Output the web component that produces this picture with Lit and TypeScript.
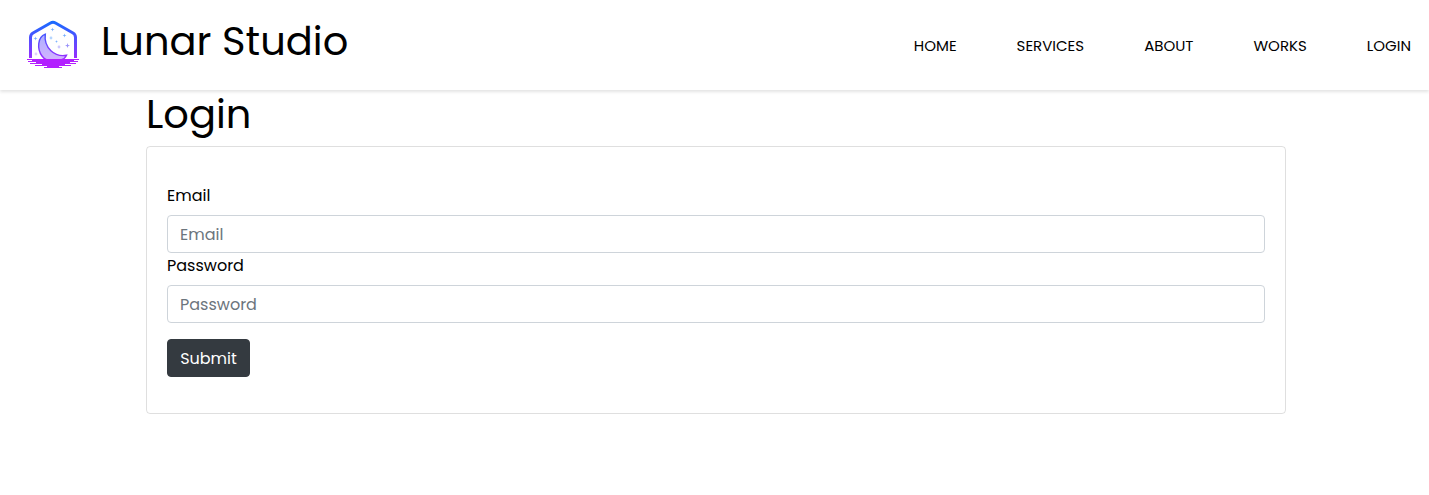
import { LitElement, html, css, svg } from "lit";
import { customElement } from "lit/decorators.js";

const star = (x: number, y: number, r: number) => svg`<path d="M${x} ${y - r}L${x + r * 0.25} ${y - r * 0.25}L${x + r} ${y}L${x + r * 0.25} ${y + r * 0.25}L${x} ${y + r}L${x - r * 0.25} ${y + r * 0.25}L${x - r} ${y}L${x - r * 0.25} ${y - r * 0.25}Z"/>`;

@customElement("app-root")
export class AppRoot extends LitElement {
  static styles = css`
    :host { display: block; min-height: 495px; background: #fff; color: #000; font: 400 16px/24px Poppins, Inter, "Open Sans", sans-serif; }
    * { box-sizing: border-box; }
    .header { height: 90px; display: flex; justify-content: space-between; box-shadow: 0 2px 3px rgba(0,0,0,.11); clip-path: inset(0 0 -8px 0); padding: 0 18px 0 27px; }
    .brand { display: flex; }
    .logo { width: 52px; height: 50px; margin-top: 20px; }
    .name { font-size: 40px; line-height: 48px; margin: 17px 0 0 22px; white-space: nowrap; }
    .nav { display: flex; gap: 60px; margin: 34px 0 0; padding: 0; list-style: none; font-size: 15px; }
    .nav a { color: inherit; text-decoration: none; display: block; }
    .main { width: 1140px; margin: 0 0 0 146px; }
    .title { font-size: 40px; font-weight: 400; line-height: 48px; margin: 0 0 8px; }
    .card { border: 1px solid rgba(0,0,0,.125); border-radius: 4px; padding: 36px 20px; }
    .label { display: block; line-height: 26px; margin-bottom: 6px; }
    .input { display: block; width: 100%; height: 38px; padding: 6px 12px; border: 1px solid #ced4da; border-radius: 4px; font: inherit; background: #fff; }
    .input::placeholder { color: #6c757d; opacity: 1; }
    .submit { display: block; width: 83px; height: 38px; margin-top: 16px; padding: 2px 0 0; border: 1px solid #343a40; border-radius: 4px; background: #343a40; color: #fff; font: inherit; }
  `;

  render() {
    return html`
      <header class="header">
        <div class="brand">
          <svg class="logo" viewBox="0 0 52 50">
            <defs>
              <linearGradient id="edge" gradientUnits="userSpaceOnUse" x1="0" y1="1" x2="0" y2="46"><stop stop-color="#176cff"/><stop offset=".5" stop-color="#6347ff"/><stop offset="1" stop-color="#b620ff"/></linearGradient>
              <linearGradient id="fill" gradientUnits="userSpaceOnUse" x1="0" y1="12" x2="0" y2="40"><stop stop-color="#a9b0ff"/><stop offset="1" stop-color="#d2b2ff"/></linearGradient>
            </defs>
            <path d="M3.5 38V17.5Q3.5 14.5 6 13L23.5 3Q26 1.7 28.5 3L46 13Q48.5 14.5 48.5 17.5V38" fill="none" stroke="url(#edge)" stroke-width="3"/>
            <path d="M18.3 14.2C10.5 17 9.8 29 15 36Q17 39 20 40H34Q38 39 39.5 35.3C28 37.5 16.5 28 18.3 14.2Z" fill="url(#fill)" stroke="url(#edge)" stroke-width="1.4"/>
            <g fill="#75aeff">${star(25.5, 9.5, 2)}${star(37.5, 15.5, 2)}${star(8.5, 18.5, 2)}${star(29.5, 21.5, 1.5)}</g>
            <g fill="#9992fa">${star(40.5, 25.5, 2.5)}</g>
            <circle cx="24" cy="18" r="1.4" fill="#b5d5ff"/><circle cx="32" cy="27" r="1.4" fill="#ccc8ff"/><circle cx="9" cy="34" r="1.4" fill="#e2cfff"/>
            <path d="M0 39.5H52M1 41.5H51M3 43.5H49M8 45.5H44M17 47.5H35" stroke="#b21fff" stroke-width="1"/>
            <path d="M5 39H47V42H43V44H38V46H32V47H20V46H15V44H9V42H5Z" fill="#b21fff"/>
          </svg>
          <div class="name">Lunar Studio</div>
        </div>
        <ul class="nav">
          ${["HOME", "SERVICES", "ABOUT", "WORKS", "LOGIN"].map((t) => html`<li><a href="#">${t}</a></li>`)}
        </ul>
      </header>
      <main class="main">
        <h1 class="title">Login</h1>
        <form class="card">
          <label class="label" for="email">Email</label>
          <input class="input" id="email" type="email" placeholder="Email" />
          <label class="label" for="password">Password</label>
          <input class="input" id="password" type="password" placeholder="Password" />
          <button class="submit" type="button">Submit</button>
        </form>
      </main>
    `;
  }
}
